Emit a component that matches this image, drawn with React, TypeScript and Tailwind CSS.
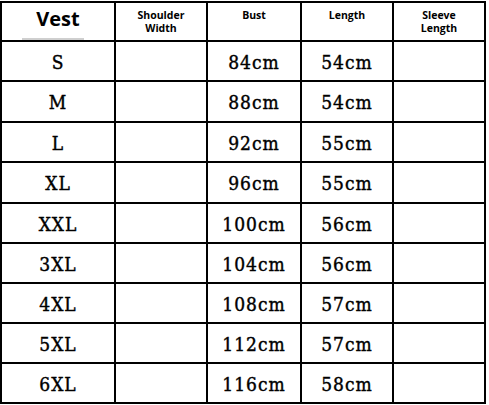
const rows = [
  { size: 'S', bust: '84cm', length: '54cm' },
  { size: 'M', bust: '88cm', length: '54cm' },
  { size: 'L', bust: '92cm', length: '55cm' },
  { size: 'XL', bust: '96cm', length: '55cm' },
  { size: 'XXL', bust: '100cm', length: '56cm' },
  { size: '3XL', bust: '104cm', length: '56cm' },
  { size: '4XL', bust: '108cm', length: '57cm' },
  { size: '5XL', bust: '112cm', length: '57cm' },
  { size: '6XL', bust: '116cm', length: '58cm' },
];

const cell = 'border-r-2 border-b-2 border-black flex items-center justify-center';
const head = 'border-r-2 border-b-2 border-black flex justify-center pt-[6px] text-center text-[10.5px] leading-[13px] font-bold';
const body = "font-['DejaVu_Serif_Condensed','DejaVu_Serif',serif] [font-stretch:condensed] text-[19px] [-webkit-text-stroke:0.4px_#000] text-black pt-[2px] tracking-[1px]";

export default function App() {
  return (
    <div className="w-[489px] h-[405px] bg-white overflow-hidden">
      <div className="mt-[1px] inline-grid grid-cols-[114px_92px_94px_92px_92px] grid-rows-[39px_40px_41px_40px_41px_40px_40px_40px_40px_40px] border-l-2 border-t-2 border-black font-['Open_Sans',sans-serif] text-black">
        {/* Header */}
        <div className="border-r-2 border-b-2 border-black flex flex-col items-center">
          <span className="flex-1 flex items-center text-[20px] font-bold pb-[3px]">Vest</span>
          <div className="h-[2px] w-[62px] mr-[10px] bg-[#cfcfcf]" />
        </div>
        <div className={head}>
          <span>Shoulder<br />Width</span>
        </div>
        <div className={head}>
          <span>Bust</span>
        </div>
        <div className={head}>
          <span>Length</span>
        </div>
        <div className={head}>
          <span>Sleeve<br />Length</span>
        </div>

        {/* Sizes */}
        {rows.map((r) => (
          <>
            <div key={r.size + 'a'} className={cell}>
              <span className={body}>{r.size}</span>
            </div>
            <div key={r.size + 'b'} className={cell} />
            <div key={r.size + 'c'} className={cell}>
              <span className={body}>{r.bust}</span>
            </div>
            <div key={r.size + 'd'} className={cell}>
              <span className={body}>{r.length}</span>
            </div>
            <div key={r.size + 'e'} className={cell} />
          </>
        ))}
      </div>
    </div>
  );
}
